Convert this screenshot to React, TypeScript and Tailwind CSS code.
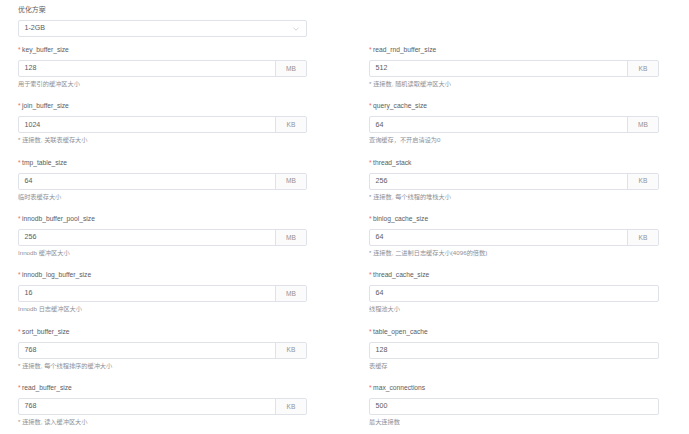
import React from "react";

type Item = { name: string; value: string; unit?: string; help: string };

const items: Item[] = [
  { name: "key_buffer_size", value: "128", unit: "MB", help: "用于索引的缓冲区大小" },
  { name: "read_rnd_buffer_size", value: "512", unit: "KB", help: "* 连接数, 随机读取缓冲区大小" },
  { name: "join_buffer_size", value: "1024", unit: "KB", help: "* 连接数, 关联表缓存大小" },
  { name: "query_cache_size", value: "64", unit: "MB", help: "查询缓存，不开启请设为0" },
  { name: "tmp_table_size", value: "64", unit: "MB", help: "临时表缓存大小" },
  { name: "thread_stack", value: "256", unit: "KB", help: "* 连接数, 每个线程的堆栈大小" },
  { name: "innodb_buffer_pool_size", value: "256", unit: "MB", help: "Innodb 缓冲区大小" },
  { name: "binlog_cache_size", value: "64", unit: "KB", help: "* 连接数, 二进制日志缓存大小(4096的倍数)" },
  { name: "innodb_log_buffer_size", value: "16", unit: "MB", help: "Innodb 日志缓冲区大小" },
  { name: "thread_cache_size", value: "64", help: "线程池大小" },
  { name: "sort_buffer_size", value: "768", unit: "KB", help: "* 连接数, 每个线程排序的缓冲大小" },
  { name: "table_open_cache", value: "128", help: "表缓存" },
  { name: "read_buffer_size", value: "768", unit: "KB", help: "* 连接数, 读入缓冲区大小" },
  { name: "max_connections", value: "500", help: "最大连接数" },
];

function Field({ item }: { item: Item }) {
  return (
    <div className="flex flex-col">
      <div className="h-[10px] leading-[10px] text-[6.7px] text-[#5a5c61] whitespace-nowrap">
        <span className="text-[#f56c6c] mr-[1.5px]">*</span>
        {item.name}
      </div>
      <div className="mt-[5px] h-[17px] flex border border-[#dfe2e8] rounded-[2px] bg-white">
        <div className="flex-1 flex items-center pl-[5.5px] text-[7.1px] text-[#5a5c61]">{item.value}</div>
        {item.unit && (
          <div className="w-[31px] flex items-center justify-center border-l border-[#dfe2e8] bg-[#fbfbfc] text-[6.6px] text-[#909399] rounded-r-[2px]">
            {item.unit}
          </div>
        )}
      </div>
      <div className="mt-[2px] h-[10px] leading-[10px] text-[6.2px] text-[#8e9096] whitespace-nowrap">
        {item.help}
      </div>
    </div>
  );
}

export default function App() {
  return (
    <div
      className="w-[689px] h-[434px] bg-white overflow-hidden pl-[18px] pt-[5px]"
      style={{ fontFamily: '"Liberation Sans", "Noto Sans CJK SC", sans-serif' }}
    >
      <div className="w-[289px]">
        <div className="h-[10px] leading-[10px] text-[6.9px] text-[#5a5c61]">优化方案</div>
        <div className="mt-[5px] h-[17px] flex items-center justify-between border border-[#dfe2e8] rounded-[2px] pl-[5.5px] pr-[7px] text-[7.1px] text-[#5a5c61]">
          <span>1-2GB</span>
          <svg width="6" height="4" viewBox="0 0 6 4" fill="none">
            <path d="M0.5 0.8 L3 3.2 L5.5 0.8" stroke="#c0c4cc" strokeWidth="0.7" />
          </svg>
        </div>
      </div>
      <div className="mt-[8px] grid grid-cols-[289px_290px] gap-x-[62px] gap-y-[12.33px]">
        {items.map((it) => (
          <Field key={it.name} item={it} />
        ))}
      </div>
    </div>
  );
}
